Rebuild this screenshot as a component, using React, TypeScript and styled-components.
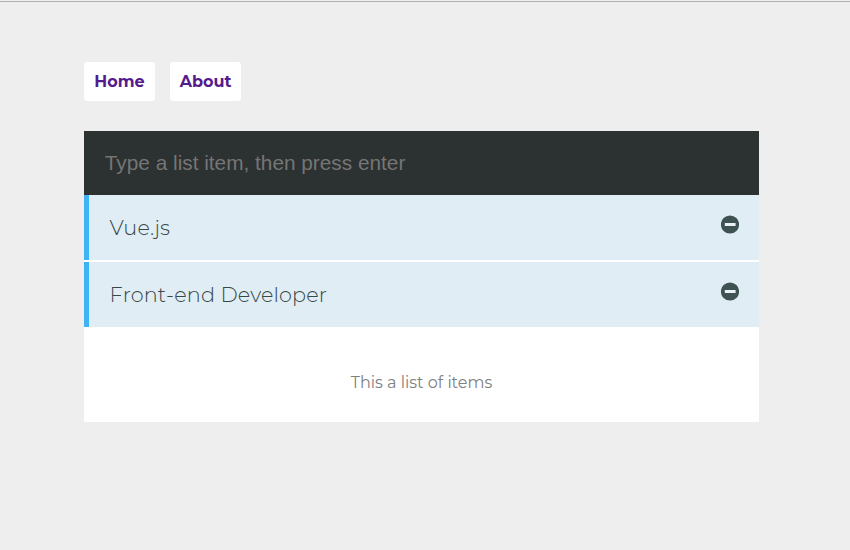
import React, { useState } from "react";
import styled, { createGlobalStyle } from "styled-components";

const GlobalStyle = createGlobalStyle`
  * { box-sizing: border-box; }
  body {
    margin: 0;
    background: #eeeeee;
    font-family: Montserrat, Inter, sans-serif;
  }
`;

const Page = styled.div`
  height: 550px;
  overflow: hidden;
  padding-top: 1px;
`;

const TopRule = styled.div`
  height: 1px;
  background: #b1b3b3;
`;

const Content = styled.main`
  width: 675px;
  margin: 60px 0 0 84px;
`;

const Nav = styled.nav`
  display: flex;
  gap: 15px;
  margin-bottom: 30px;
`;

const NavLink = styled.a`
  display: flex;
  align-items: center;
  justify-content: center;
  width: 71px;
  height: 39px;
  border-radius: 3px;
  background: #ffffff;
  color: #551a8b;
  font-size: 16px;
  font-weight: 700;
  text-decoration: none;
  white-space: nowrap;
`;

const Holder = styled.section`
  background: #ffffff;
`;

const Input = styled.input`
  display: block;
  width: 100%;
  height: 64px;
  padding: 0 20.8px;
  border: 0;
  outline: 0;
  border-radius: 0;
  background: #2c3131;
  color: #687f7f;
  font-family: "Liberation Sans", Arial, sans-serif;
  font-size: 20.8px;
  &::placeholder {
    color: #757575;
  }
`;

const List = styled.ul`
  display: flex;
  flex-direction: column;
  gap: 2px;
  margin: 0;
  padding: 0;
  list-style: none;
`;

const Item = styled.li`
  display: flex;
  justify-content: space-between;
  align-items: flex-start;
  height: 65px;
  padding: 20px 20px 0 20.6px;
  border-left: 5px solid #3eb3f6;
  background: #e0edf4;
  color: #3e5252;
`;

const Label = styled.span`
  color: #374848;
  font-size: 20.8px;
  font-weight: 300;
  line-height: 26px;
  letter-spacing: 0.12px;
`;

const RemoveIcon = styled.svg`
  display: block;
  width: 18px;
  height: 19px;
  cursor: pointer;
`;

const Caption = styled.p`
  margin: 0;
  height: 95px;
  padding-top: 46px;
  color: #808080;
  font-size: 16px;
  font-weight: 400;
  line-height: 20px;
  text-align: center;
`;

const skills = ["Vue.js", "Front-end Developer"];

export default function App() {
  const [value, setValue] = useState("");
  return (
    <Page>
      <GlobalStyle />
      <TopRule />
      <Content>
        <Nav>
          <NavLink href="#home">Home</NavLink>
          <NavLink href="#about">About</NavLink>
        </Nav>
        <Holder>
          <Input
            placeholder="Type a list item, then press enter"
            value={value}
            onChange={(e) => setValue(e.target.value)}
          />
          <List>
            {skills.map((skill) => (
              <Item key={skill}>
                <Label>{skill}</Label>
                <RemoveIcon viewBox="0 0 18 19">
                  <circle cx="9" cy="9.5" r="9.1" fill="#3e5252" />
                  <rect x="3.8" y="8" width="10.8" height="3" fill="#e8f1f6" />
                </RemoveIcon>
              </Item>
            ))}
          </List>
          <Caption>This a list of items</Caption>
        </Holder>
      </Content>
    </Page>
  );
}
